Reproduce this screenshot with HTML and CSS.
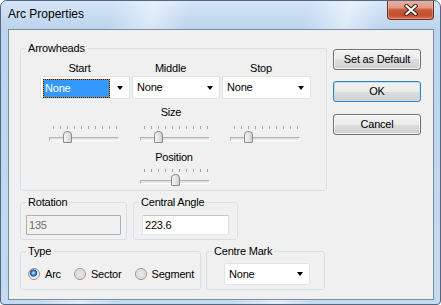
FILE: index.html
```html
<!DOCTYPE html>
<html>
<head>
<meta charset="utf-8">
<link rel="stylesheet" href="styles.css">
</head>
<body>
<div class="window">
  <div class="titlebar">
    <span class="title">Arc Properties</span>
    <div class="close">
      <svg width="14" height="12" viewBox="0 0 14 12"><path d="M2.5 2 L11.5 10 M11.5 2 L2.5 10" stroke="#3a1c14" stroke-width="4.2" stroke-linecap="square"/><path d="M2.5 2 L11.5 10 M11.5 2 L2.5 10" stroke="#ffffff" stroke-width="2.2" stroke-linecap="square"/></svg>
    </div>
  </div>
  <div class="client">
    <div class="left">
      <fieldset class="group arrowheads">
        <legend>Arrowheads</legend>
        <div class="arrows">
          <span class="lbl">Start</span>
          <span class="lbl">Middle</span>
          <span class="lbl">Stop</span>
          <div class="combo row2 focused"><span class="val">None</span><span class="caret"></span></div>
          <div class="combo row2"><span class="val">None</span><span class="caret"></span></div>
          <div class="combo row2"><span class="val">None</span><span class="caret"></span></div>
          <span class="lbl size">Size</span>
          <div class="slider first c1"><span class="ticks"></span><span class="track"></span><span class="thumb" style="left:14px"></span></div>
          <div class="slider c2"><span class="ticks"></span><span class="track"></span><span class="thumb" style="left:14px"></span></div>
          <div class="slider c3"><span class="ticks"></span><span class="track"></span><span class="thumb" style="left:14px"></span></div>
          <span class="lbl position">Position</span>
          <div class="slider c2 pos"><span class="ticks"></span><span class="track"></span><span class="thumb" style="left:31px"></span></div>
        </div>
      </fieldset>
      <div class="grouprow">
        <fieldset class="group rotation">
          <legend>Rotation</legend>
          <input class="edit disabled" type="text" value="135" disabled>
        </fieldset>
        <fieldset class="group angle">
          <legend>Central Angle</legend>
          <input class="edit" type="text" value="223.6">
        </fieldset>
      </div>
      <div class="grouprow">
        <fieldset class="group type">
          <legend>Type</legend>
          <div class="radios">
            <label class="opt"><span class="radio checked"></span>Arc</label>
            <label class="opt"><span class="radio"></span>Sector</label>
            <label class="opt"><span class="radio"></span>Segment</label>
          </div>
        </fieldset>
        <fieldset class="group centre">
          <legend>Centre Mark</legend>
          <div class="combo centre-combo"><span class="val">None</span><span class="caret"></span></div>
        </fieldset>
      </div>
    </div>
    <div class="buttons">
      <div class="btn">Set as Default</div>
      <div class="btn default ok">OK</div>
      <div class="btn cancel">Cancel</div>
    </div>
  </div>
</div>
</body>
</html>
```
FILE: styles.css
```css
html, body {
  margin: 0;
  padding: 0;
  background: #ffffff;
}
body {
  font-family: "Liberation Sans", Arial, sans-serif;
  font-size: 11px;
  letter-spacing: -0.2px;
  color: #000;
}
.window {
  box-sizing: border-box;
  width: 441px;
  height: 305px;
  border: 1px solid #56677d;
  border-radius: 7px 7px 4px 4px;
  display: flex;
  flex-direction: column;
  overflow: hidden;
  background:
    linear-gradient(104deg, rgba(255,255,255,0) 22%, rgba(255,255,255,.45) 30%, rgba(255,255,255,0) 37%, rgba(255,255,255,0) 60%, rgba(255,255,255,.5) 68%, rgba(255,255,255,0) 75%),
    linear-gradient(#d4e5f7, #bcd4ee 28px, #c4daf1);
}
.titlebar {
  height: 28px;
  display: flex;
  align-items: flex-start;
  flex: none;
}
.title {
  font-size: 12px;
  line-height: 15px;
  letter-spacing: 0;
  padding: 6px 0 0 7px;
}
.close {
  margin-left: auto;
  margin-right: 6px;
  margin-top: -1px;
  width: 47px;
  height: 20px;
  box-sizing: border-box;
  border: 1px solid #6b2f1f;
  border-top: none;
  border-radius: 0 0 4px 4px;
  background: linear-gradient(#eab3a3, #e09a85 40%, #c9593a 52%, #c24e2c 80%, #d8744f);
  display: flex;
  align-items: center;
  justify-content: center;
  box-shadow: inset 0 0 0 1px rgba(255,220,200,.35);
}
.close svg { display: block; }
.client {
  flex: 1;
  margin: 0 6px 4px 7px;
  border: 1px solid #7b8da3;
  background: #f0f0f0;
  display: flex;
  align-items: flex-start;
}
.left {
  width: 318px;
  box-sizing: border-box;
  padding: 12px 0 0 11px;
  display: flex;
  flex-direction: column;
  gap: 5px;
}
.group {
  margin: 0;
  padding: 0;
  min-width: 0;
  border: 1px solid #d5dfe5;
  border-radius: 3px;
  box-sizing: border-box;
}
.group legend {
  padding: 0 2px;
  margin-left: 5px;
  line-height: 13px;
}
.arrowheads {
  width: 307px;
  padding-bottom: 2px;
}
.arrows {
  margin: 7px 0 0 19px;
  display: grid;
  grid-template-columns: 90px 88px 89px;
  column-gap: 2px;
}
.lbl {
  line-height: 13px;
  text-align: center;
  padding-right: 11px;
}
.combo {
  position: relative;
  box-sizing: border-box;
  height: 23px;
  background: #ffffff;
  border: 1px solid #dfe3e8;
  border-radius: 2px;
  display: flex;
  align-items: center;
}
.row2 { margin-top: 1px; }
.combo .val {
  flex: 1;
  line-height: 17px;
  padding-left: 4px;
}
.combo.focused .val {
  margin: 2px 19px 1px 2px;
  padding-left: 1px;
  color: #ffffff;
  border: 1px dotted #1a1a1a;
  background: linear-gradient(#3399ff, #3399ff) padding-box, #d58a3c border-box;
}
.caret {
  width: 0;
  height: 0;
  border-top: 4px solid #000;
  border-left: 3.5px solid transparent;
  border-right: 3.5px solid transparent;
  margin-right: 6px;
  flex: none;
}
.combo.focused .caret {
  position: absolute;
  right: 0;
  top: 9px;
}
.size {
  grid-column: 2;
  margin-top: 7px;
  padding-right: 10px;
}
.position {
  grid-column: 2;
  margin-top: 6px;
  padding-right: 4px;
}
.slider {
  position: relative;
  width: 70px;
  height: 20px;
  margin-top: 6px;
  margin-left: 8px;
}
.slider.first { margin-left: 9px; }
.c1 { grid-column: 1; }
.c2 { grid-column: 2; }
.c3 { grid-column: 3; }
.slider.pos { margin-top: 4px; }
.ticks {
  position: absolute;
  top: 1px;
  left: 4px;
  width: 64px;
  height: 3px;
  background: repeating-linear-gradient(to right, #a3a3a3 0 1px, transparent 1px 7px);
}
.track {
  position: absolute;
  top: 12px;
  left: 0;
  right: 0;
  height: 4px;
  box-sizing: border-box;
  border: 1px solid;
  border-color: #b0b0b0 #ffffff #ffffff #b0b0b0;
  background: #e4e4e4;
}
.thumb {
  position: absolute;
  top: 6px;
  width: 9px;
  height: 12px;
  box-sizing: border-box;
  border: 1px solid #8a8a8a;
  border-radius: 4px 4px 1px 1px;
  background: linear-gradient(to right, #f4f4f4, #e2e2e2 60%, #d0d0d0);
}
.grouprow {
  display: flex;
}
.rotation {
  width: 107px;
  padding-bottom: 4px;
}
.angle {
  width: 105px;
  margin-left: 6px;
  padding-bottom: 4px;
}
.edit {
  box-sizing: border-box;
  height: 20px;
  margin: 6px 0 0 0;
  padding: 0 0 0 2px;
  font: inherit;
  letter-spacing: inherit;
  line-height: 18px;
  color: #000;
  background: #ffffff;
  border: 1px solid;
  border-color: #c4c7cc #dde1e6 #e3e9ef #dde1e6;
  border-radius: 1px;
  outline: none;
  display: block;
}
.rotation .edit {
  width: 95px;
  margin-left: 5px;
}
.angle .edit {
  width: 87px;
  margin-left: 8px;
}
.edit.disabled {
  background: #f0f0f0;
  color: #6d6d6d;
  -webkit-text-fill-color: #6d6d6d;
  border-color: #adb2b5;
  opacity: 1;
}
.type {
  width: 181px;
  padding-bottom: 8px;
}
.centre {
  width: 119px;
  margin-left: 5px;
  padding-bottom: 4px;
}
.radios {
  margin: 8px 0 0 7px;
  height: 15px;
  display: flex;
  align-items: center;
  gap: 13px;
}
.opt {
  display: flex;
  align-items: center;
  gap: 5px;
}
.radio {
  width: 12px;
  height: 12px;
  box-sizing: border-box;
  border-radius: 50%;
  border: 1px solid #a08b8b;
  background: radial-gradient(circle, #e6e6e6 0 2.5px, #d2d2d2 3.5px, #f6f6f6 5px);
}
.radio.checked {
  background: radial-gradient(circle at 45% 40%, #a8d6ff 0 0.8px, #3a86d8 2px, #1a4f9a 3.3px, #cfcfcf 3.8px, #f6f6f6 5px);
}
.centre-combo {
  width: 86px;
  height: 22px;
  margin: 5px 0 0 17px;
}
.centre-combo .caret { margin-right: 6px; }
.buttons {
  margin-left: 6px;
  margin-top: 19px;
  width: 88px;
  display: flex;
  flex-direction: column;
}
.btn {
  box-sizing: border-box;
  height: 21px;
  border: 1px solid #707070;
  border-radius: 3px;
  background: linear-gradient(#f2f2f2, #ebebeb 50%, #dddddd 50%, #cfcfcf);
  box-shadow: inset 0 0 0 1px rgba(255,255,255,.7);
  text-align: center;
  line-height: 19px;
}
.btn.default {
  border-color: #3c7fb1;
  box-shadow: inset 0 0 0 1px #b8e2f8;
}
.ok { margin-top: 11px; }
.cancel { margin-top: 12px; }
```
